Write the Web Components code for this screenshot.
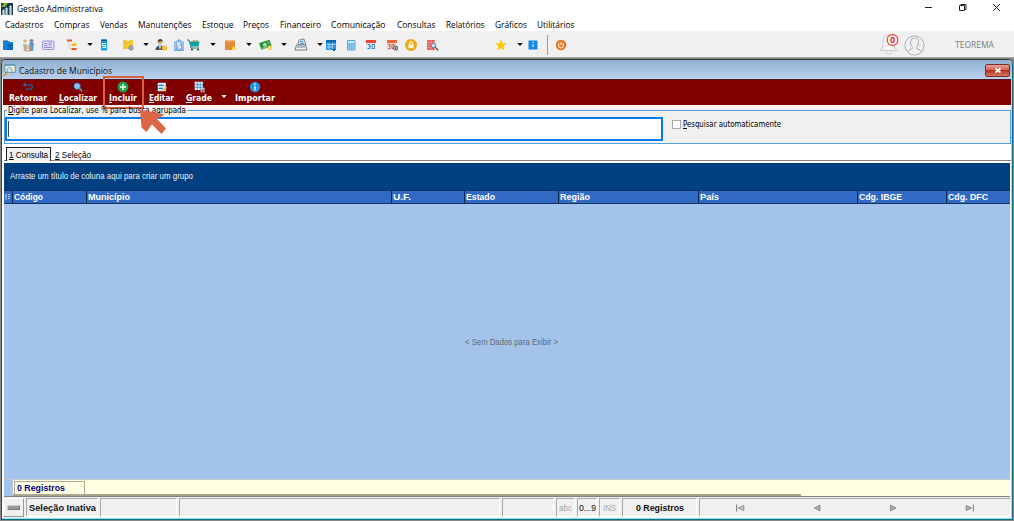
<!DOCTYPE html>
<html lang="pt-BR">
<head>
<meta charset="utf-8">
<title>Gestão Administrativa</title>
<style>
    html, body { margin: 0; height: 100%; overflow: hidden; }
    body { background: #fff; font-family: "Open Sans", "Noto Sans", sans-serif; font-size: 9px; color: #000; }
</style>
</head>
<body>
<app-shell></app-shell>

<script>
const ICONS = {
    folder: '<path d="M2 3h6l1 1h3v8H2z" fill="#1585dc"/><path d="M6 6h6v6H6z" fill="#0869bd"/><path d="M2 3h5" stroke="#0b60a8"/>',
    people: '<circle cx="4" cy="3" r="1.8" fill="#e5b178"/><circle cx="10.500" cy="3" r="2" fill="#7b8893"/><path d="M2 6h4l-1 7H3z" fill="#9cc1b6"/><path d="M8 5h5l-1 8h-3z" fill="#6097d7"/><path d="M3.500 9l3-1 4 1" stroke="#da9054" fill="none"/><rect x="4.500" y="10" width="4.500" height="3" fill="#f6cfaf" stroke="#db7d45" stroke-width=".7"/>',
    card: '<rect x="1.500" y="3" width="11.500" height="8.500" rx="1" fill="#e8e5fa" stroke="#9a91dc"/><path d="M3 5.500h3M3 7.500h3M8 5h3M8 7h3M3 9.500h8" stroke="#8e83d1"/><path d="M7 4v6" stroke="#a7a0df" stroke-width=".7"/>',
    tree: '<path d="M4 4v7h5M4 7h4" fill="none" stroke="#cfcfcf" stroke-width=".7"/><path d="M2 1.500h5v2H2zM6.500 10h5v2h-5z" fill="#f05525"/><path d="M6.500 5.500h5V8h-5z" fill="#fbb713"/>',
    book: '<path d="M4 1.500h6v11H4z" fill="#20a4e5"/><path d="M4 1.500h6v2H4z" fill="#0d659c"/><path d="M8.500 5.500h-3v2h3v2h-3" fill="none" stroke="#fff" stroke-width=".9"/>',
    puzzle: '<path d="M2 2h3l1 1.300h2L9 2h3v9H2z" fill="#f8c52f"/><circle cx="10" cy="10" r="2.100" fill="#a6b3ca" stroke="#738099"/>',
    user: '<circle cx="6" cy="4" r="2.300" fill="#e4a161"/><path d="M3.700 4c0-4 5-4 5 0L7 2.800z" fill="#373737"/><path d="M1.500 12c0-6 9-6 9 0z" fill="#394e60"/><path d="M5 8h2l-1 4z" fill="#fff"/><circle cx="10.500" cy="10" r="2.600" fill="#f9bf31"/>',
    bank: '<path d="M2 3.300h1.700L7 1l3.200 2.300H12V13H2z" fill="#75a8e5"/><path d="M2 4h10M3 5v7M11 5v7" stroke="#bdd9f8"/><path d="M8.700 5.500H5.500v2.200h3v2.300H5.300M7 4.500v6.500" stroke="#fff" fill="none" stroke-width=".9"/>',
    cart: '<path d="M0 2h2l2 8h8M3 8h9" stroke="#347a7b" fill="none"/><path d="M2.500 3.500h10L11.300 8H4z" fill="#00a5a5"/><path d="M5 3.500l2-2 2 2z" fill="#ed6d37"/><path d="M8 3.500l2-1.500 2 1.500z" fill="#72ad43"/><circle cx="5" cy="11.500" r="1.100" fill="#37474f"/><circle cx="11" cy="11.500" r="1.100" fill="#37474f"/>',
    note: '<path d="M2 2.500h10v7L9 12H2z" fill="#e58a38"/><path d="M4 2.500h4v2H4z" fill="#f1a65a"/><circle cx="11" cy="10.500" r="2" fill="#ffda37"/>',
    money: '<g transform="rotate(-18 7 7)"><path d="M1 3h11v7H1z" fill="#2b963e"/><circle cx="6" cy="6.500" r="2" fill="#a6d6a4"/><path d="M2 9h9M10 4v3" stroke="#86c28a"/></g><circle cx="11" cy="10" r="2.200" fill="#f7d44b"/>',
    scale: '<path d="M4 7l1-5 5-1 2 6z" fill="#dce9f1" stroke="#65757f" stroke-width=".8"/><path d="M6 4l3-1M6 6l4-1" stroke="#2f86bb"/><path d="M2.500 7h9l1.500 5H1z" fill="#edf1f4" stroke="#5c7080" stroke-width=".9"/><path d="M3 9h8" stroke="#6d8697"/>',
    table: '<path d="M2 2h10v10H2z" fill="#329be5"/><path d="M2 2h10v2.500H2z" fill="#0767b7"/><path d="M3 6.500h8M3 9h8M5 5v6M8.500 5v6" stroke="#bbdef8" stroke-width=".7"/><path d="M10 8v5M8 11l2 2 2-2" stroke="#075da3" fill="none"/>',
    calc: '<rect x="3" y="2" width="8.500" height="10.500" rx="1" fill="#56a9df"/><path d="M4 3h6.500v2.300H4z" fill="#c9e8fb"/><path d="M4 7h7M4 9h7M4 11h7" stroke="#d6efff" stroke-dasharray="1.300 .8"/>',
    calendar: '<path d="M2 3h10v9H2z" fill="#dfeaf4"/><path d="M2 2h10v3H2z" fill="#ef4535"/><path d="M3.500 6.500H6v4H3.500m1-2H6M8 6.500h2.500v4H8z" fill="none" stroke="#4d81bb"/>',
    calgear: '<path d="M2 3h9v9H2z" fill="#f3d5cd"/><path d="M2 2h10v3H2z" fill="#f06735"/><path d="M3 6.500h2v4H3m1-2h1M7 6.500h2v4H7z" fill="none" stroke="#c1635c"/><circle cx="10.500" cy="10" r="2" fill="#d8d8d8" stroke="#5d6872" stroke-width="1.200"/><circle cx="10.500" cy="10" r=".8" fill="#35434b"/>',
    lock: '<circle cx="7" cy="7" r="6" fill="#eba917"/><rect x="4.400" y="6.200" width="5.200" height="4" fill="#fff6ce"/><path d="M5.500 6V4.500q1.500-2 3 0V6M7 7.500v1.500" stroke="#fff" fill="none"/>',
    search: '<path d="M2 2h7.500v10H2z" fill="#e85355"/><path d="M2 4.500h7M2 7h7M2 9.500h7M4 2v10M6.500 2v10" stroke="#f7b5ab" stroke-width=".5"/><circle cx="8.500" cy="7.500" r="2.400" fill="#b1ddf6" stroke="#576b79" stroke-width=".8"/><path d="M10.200 9.200l3 3" stroke="#555" stroke-width="1.300"/>',
    star: '<path d="M7 1.500l1.600 3.800 4.100.3-3.100 2.700 1 4.100L7 10.200l-3.600 2.200 1-4.100-3.100-2.700 4.100-.3z" fill="#fcc40c"/>',
    info: '<path d="M2.500 2.500h9v9h-9z" fill="#1689e8"/><path d="M7 4v1.300M7 6.200V9" stroke="#d5efff" stroke-width="1.200"/>',
    power: '<circle cx="7" cy="7" r="5.300" fill="#e87620"/><path d="M4.700 5v3q0 2 2.300 2t2.300-2V5M7 3.800V7" stroke="#fff" fill="none"/>',
    drop: '<path d="M.3 5h5.400L3 8z" fill="currentColor"/>',
    back: '<path d="M2 4.500h8q2 0 2 2.500t-2 2.500H4" stroke="#1c5fa8" stroke-width="1.600" fill="none"/><path d="M4.500 1.500L1 4.500l3.500 3z" fill="#2368b2"/>',
    find: '<circle cx="6" cy="6" r="3.500" fill="#79c8fa" stroke="#3a9ae7"/><path d="M8.500 8.500l3.300 3.300" stroke="#7e93a9" stroke-width="2"/>',
    plus: '<circle cx="7" cy="7" r="6.300" fill="#20a34c"/><path d="M7 3.500v7M3.500 7h7" stroke="#fff" stroke-width="1.600"/>',
    edit: '<path d="M2 2h9.500v10H2z" fill="#d7ebfb"/><path d="M3 5h6M3 8.500h5" stroke="#1682d4" stroke-width="1.500"/><path d="M7 11.500l1-2 3.500-3 1.500 1.500-3.500 3z" fill="#f7b23c"/>',
    grid: '<path d="M2 1h9.500v9.500H2z" fill="#e8f5ff"/><path d="M2 4.200h9.500M2 7.400h9.500M5.200 1v9.500M8.400 1v9.500" stroke="#2a83d5" stroke-width=".9"/><path d="M9 8h4.500v5H9z" fill="#aecbe5"/><path d="M10.300 10.300h2v2h-2z" fill="#b21c24"/>',
    about: '<circle cx="7" cy="7" r="6" fill="#2094e9"/><path d="M7 3v1.800M7 6v5" stroke="#fff" stroke-width="1.600"/>',
    form: '<path d="M2 1h11v8H2z" fill="#f6f4dd" stroke="#54727c" stroke-width=".8"/><path d="M2 1.500h11" stroke="#4a9dc1"/><circle cx="7" cy="6.500" r="2.900" fill="#c4e8f5" stroke="#668a9b" stroke-width=".8"/><path d="M5 9l-4 4" stroke="#d59b43" stroke-width="1.600"/>',
    first: '<path d="M3 3v8" stroke="#858585" stroke-width="1.300"/><path d="M11.500 4v6L5 7z" fill="#ccc" stroke="#858585"/>',
    prev: '<path d="M10.500 3.500v7L4 7z" fill="#aaa" stroke="#858585"/>',
    next: '<path d="M4 3.500v7L10.500 7z" fill="#aaa" stroke="#858585"/>',
    last: '<path d="M2.500 4v6L9 7z" fill="#aaa" stroke="#858585"/><path d="M11 3v8" stroke="#858585" stroke-width="1.300"/>'
};

class UiIcon extends HTMLElement {
    constructor() {
        super();
        this.attachShadow({mode: 'open'});
    }
    connectedCallback() {
        const name = this.getAttribute('name');
        const width = name === 'drop' ? 6 : 14;
        const size = this.getAttribute('size') || width;
        this.shadowRoot.innerHTML = `
        <style>
            :host { display: block; flex: none; width: ${size}px; }
            svg { display: block; width: 100%; }
        </style>
        <svg viewBox="0 0 ${width} 14">${ICONS[name]}</svg>`;
    }
}
customElements.define('ui-icon', UiIcon);

// A single-line label, condensed or widened to the width it is given.
class UiLabel extends HTMLElement {
    constructor() {
        super();
        this.attachShadow({mode: 'open'}).innerHTML = `
        <style>
            :host { display: block; flex: none; white-space: nowrap; }
            span { display: inline-block; transform-origin: 0 50%; }
            ::slotted(u) { text-underline-offset: 1px; text-decoration-thickness: 1px; }
        </style>
        <span><slot></slot></span>`;
    }
    connectedCallback() {
        const target = Number(this.getAttribute('w'));
        if (!target) return;
        const span = this.shadowRoot.querySelector('span');
        const natural = span.getBoundingClientRect().width;
        span.style.transform = `scaleX(${target / natural})`;
        this.style.width = target + 'px';
    }
}

class TitleBar extends HTMLElement {
    constructor() {
        super();
        this.attachShadow({mode: 'open'}).innerHTML = `
        <style>
            :host { display: flex; height: 17px; align-items: center; }
            .logo { width: 12px; height: 12px; margin: 0 4px 0 1px; }
            .space { flex: 1; }
            .buttons { width: 85px; height: 17px; margin-right: 4px; }
        </style>
        <svg class="logo" viewBox="0 0 12 12"><path d="M0 0h12v12H0z" fill="#123a55"/><path d="M0 4l3-4h4L4 4z" fill="#82b52a"/><path d="M2 12V7h1v5M5 12V5h1v7M9 12V3h1v9" stroke="#fff" fill="none"/></svg>
        <ui-label w="86">Gestão Administrativa</ui-label>
        <div class="space"></div>
        <svg class="buttons" viewBox="0 0 85 17" fill="none" stroke="#222">
            <path d="M0 7.500h7M34.500 5.500h5v5h-5zM36 5V4.500h5v5h-1M68 4l7 7M75 4l-7 7"/>
        </svg>`;
    }
}

class MenuBar extends HTMLElement {
    constructor() {
        super();
        const items = [['Cadastros', 38.5, 4.5], ['Compras', 35.5, 10.5], ['Vendas', 27.5, 10.5], ['Manutenções', 53.5, 10.5],
            ['Estoque', 31.5, 10.5], ['Preços', 26, 10], ['Financeiro', 41, 10.5], ['Comunicação', 54.5, 10.5],
            ['Consultas', 38.5, 11], ['Relatórios', 38.5, 10.5], ['Gráficos', 32, 10.5], ['Utilitários', 37.5, 10.5]];
        this.attachShadow({mode: 'open'}).innerHTML = `
        <style>
            :host { display: flex; height: 15px; align-items: center; border-bottom: 1px solid #f1f1f1; box-sizing: border-box; }
        </style>
        ${items.map(([t, w, gap]) => `<ui-label w="${w}" style="margin-left:${gap}px">${t}</ui-label>`).join('')}`;
    }
}

class ToolBar extends HTMLElement {
    constructor() {
        super();
        const icons = [['folder', 1], ['people', 6], ['card', 6], ['tree', 10], ['drop', 8], ['book', 4], ['puzzle', 10],
            ['drop', 8], ['user', 5], ['bank', 4], ['cart', 1], ['drop', 9], ['note', 7], ['drop', 9], ['money', 7],
            ['drop', 8], ['scale', 7], ['drop', 9], ['table', 1], ['calc', 6], ['calendar', 6], ['calgear', 7],
            ['lock', 5], ['search', 7], ['star', 55], ['drop', 9], ['info', 3]];
        this.attachShadow({mode: 'open'}).innerHTML = `
        <style>
            :host { display: flex; height: 26px; align-items: center; background: #f0f0f0; border-bottom: 1px solid #a3a3a3; box-sizing: border-box; }
            hr { width: 1px; height: 20px; margin: 0 6px 0 7px; border: 0; background: #999; }
            .space { flex: 1; }
            .bell { width: 22px; height: 25px; margin-right: 4px; }
            .avatar { width: 21px; height: 23px; margin-right: 30px; }
            ui-label { margin-right: 20px; color: #7c7c7c; }
        </style>
        ${icons.map(([n, gap]) => `<ui-icon name="${n}" style="margin-left:${gap}px"></ui-icon>`).join('')}
        <hr>
        <ui-icon name="power"></ui-icon>
        <div class="space"></div>
        <svg class="bell" viewBox="0 0 22 25">
            <path d="M2 18.500q3-2 3-6V9q0-5 5.500-6Q16 4 16 9v3.500q0 4 3 6zM7.500 19q.2 3 3 3t3-3" fill="#f4f4f4" stroke="#ccc"/>
            <circle cx="14.500" cy="8" r="5.400" fill="#fff" stroke="#e63932" stroke-width="1.100"/>
            <text x="14.500" y="11.200" text-anchor="middle" font-family="Open Sans" font-size="9" font-weight="700" fill="#f01818">0</text>
        </svg>
        <svg class="avatar" viewBox="0 0 21 23" fill="none" stroke="#a5b0b1">
            <circle cx="10.500" cy="12.500" r="9.600"/>
            <path d="M3.500 19q1-2.500 5-3.500v-1Q6.500 12.500 6.500 9t4-4 4 4-2 5.500v1q4 1 5 3.500"/>
        </svg>
        <ui-label w="39">TEOREMA</ui-label>`;
    }
}

class ActionButton extends HTMLElement {
    constructor() {
        super();
        this.attachShadow({mode: 'open'}).innerHTML = `
        <style>
            :host { display: flex; flex-direction: column; align-items: center; flex: none; position: relative;
                color: #fff; font: bold 8.5px/11px "DejaVu Sans", sans-serif; }
            :host([marked])::after { content: ""; position: absolute; left: -6px; right: -7px; top: -4px; height: 29px;
                border: 2px solid #d8603f; }
            ui-icon { margin-top: 1px; }
        </style>
        <ui-icon name="${this.getAttribute('icon')}" size="12"></ui-icon>
        <slot></slot>`;
    }
}

class SearchPanel extends HTMLElement {
    constructor() {
        super();
        this.attachShadow({mode: 'open'}).innerHTML = `
        <style>
            :host { display: block; height: 40px; margin-left: 1px; flex: none;
                background: linear-gradient(#fbf3f3 4px, #f0f0f0 4px, #f0f0f0 39px, #fff 39px); font: 8.5px/11px "DejaVu Sans", sans-serif; }
            fieldset { display: flex; align-items: flex-start; height: 39px; margin: 0; padding: 0; min-width: 0;
                border: 1px solid #55a3dc; box-sizing: border-box; }
            legend { margin-left: 2px; padding: 0 1px; height: 11px; }
            .input { width: 658px; height: 24px; margin-top: 1px; padding: 2px 1px; border: 2px solid #0878ef; background: #fff; box-sizing: border-box; }
            .input::before { content: ""; display: block; width: 1px; height: 16px; background: #444; }
            .box { width: 9px; height: 9px; margin: 4px 2px 0 9px; border: 1px solid #aaa; background: #fff; box-sizing: border-box; }
            .box + ui-label { margin-top: 3px; }
        </style>
        <fieldset>
            <legend><ui-label w="178"><u>D</u>igite para Localizar, use % para busca agrupada</ui-label></legend>
            <div class="input"></div>
            <div class="box"></div>
            <ui-label w="98"><u>P</u>esquisar automaticamente</ui-label>
        </fieldset>`;
    }
}

class TabStrip extends HTMLElement {
    constructor() {
        super();
        this.attachShadow({mode: 'open'}).innerHTML = `
        <style>
            :host { display: flex; flex: none; height: 16px; margin: 0 0 2px 1px; padding: 2px 0 0 2px; background: #fff; border-bottom: 1px solid #848484; box-sizing: border-box; }
            .tab { height: 14px; padding: 0 4px; line-height: 16px; }
            .on { padding: 0 2px; line-height: 14px; border: 1px solid #222; border-bottom: 0; background: #f0f0f0; box-sizing: border-box; }
        </style>
        <div class="tab on"><ui-label w="39"><u>1</u> Consulta</ui-label></div>
        <div class="tab"><ui-label w="36"><u>2</u> Seleção</ui-label></div>`;
    }
}

class DataGrid extends HTMLElement {
    constructor() {
        super();
        const cols = [['Código', 74, 29], ['Município', 305, 42], ['U.F.', 73, 18], ['Estado', 94, 29], ['Região', 140, 30],
            ['País', 159, 19], ['Cdg. IBGE', 89, 43], ['Cdg. DFC', 64, 40]];
        this.attachShadow({mode: 'open'}).innerHTML = `
        <style>
            :host { display: flex; flex-direction: column; flex: 1; margin: 0 1px; background: #a4c3eb; border-bottom: 1px solid #85847c; }
            .group { height: 27px; box-sizing: border-box; padding: 7px 0 0 6px; line-height: 13px; background: #003f80; color: #eef4fb; }
            .head { display: flex; height: 14px; background: #316ac5; border: solid #123260; border-width: 1px 0; box-sizing: border-box;
                color: #fff; font-weight: bold; line-height: 13px; }
            .head div { border-left: 1px solid #10264d; padding-left: 1px; box-sizing: border-box; flex: none; }
            .mark { width: 8px; display: flex; align-items: center; justify-content: center; flex: none; }
            .body { flex: 1; display: flex; align-items: center; justify-content: center; color: #626971; padding-left: 9px; }
            .foot { display: flex; height: 17px; background: #ffffe1; border-top: 1px solid #c8c8c8; box-sizing: border-box; }
            .gutter { width: 8px; background: #a4c3eb; border-right: 1px solid #c3c9d1; }
            .sum { display: flex; flex-direction: column; width: 788px; border-bottom: 2px solid #a5a48a; }
            .count { width: 71px; height: 14px; flex: none; margin: 1px 0 -1px 1px; padding-left: 2px; box-sizing: border-box; border: 1px solid #aaa99a;
                line-height: 13px; color: #000080; font-weight: bold; }
        </style>
        <div class="group"><ui-label w="183">Arraste um título de coluna aqui para criar um grupo</ui-label></div>
        <div class="head">
            <span class="mark"><svg width="6" height="8"><path d="M1 1v6M3 1.500h2M3 3.500h2M3 5.500h2" stroke="#b9d1f4"/></svg></span>
            ${cols.map(([t, w, tw]) => `<div style="width:${w}px"><ui-label w="${tw}">${t}</ui-label></div>`).join('')}
        </div>
        <div class="body"><ui-label w="93">&lt; Sem Dados para Exibir &gt;</ui-label></div>
        <div class="foot">
            <div class="gutter"></div>
            <div class="sum"><div class="count"><ui-label w="48">0 Registros</ui-label></div></div>
        </div>`;
    }
}

class StatusBar extends HTMLElement {
    constructor() {
        super();
        this.attachShadow({mode: 'open'}).innerHTML = `
        <style>
            :host { display: grid; grid-template-columns: 21px 72px 77px 321px 52px 19px 20px 21px 75px 1fr; gap: 2px; flex: none;
                height: 21px; padding: 1px 0; background: #f0f0f0; box-sizing: border-box; }
            div { display: flex; align-items: center; justify-content: center; border: 1px solid; border-color: #aaa #fff #fff #aaa; }
            .btn { border-color: #fff #999 #999 #fff; }
            .btn i { width: 11px; height: 3px; border: 1px solid; border-color: #ccc #777 #777 #ccc; background: #999; }
            b, .nums { color: #111; }
            .off { color: #a6a6a6; }
            .nav { justify-content: space-between; padding: 0 34px; }
        </style>
        <div class="btn"><i></i></div>
        <div><ui-label w="67"><b>Seleção Inativa</b></ui-label></div>
        <div></div><div></div><div></div>
        <div class="off"><ui-label w="13">abc</ui-label></div>
        <div class="nums"><ui-label w="17">0...9</ui-label></div>
        <div class="off"><ui-label w="13">INS</ui-label></div>
        <div><ui-label w="48"><b>0 Registros</b></ui-label></div>
        <div class="nav">
            <ui-icon name="first" size="12"></ui-icon><ui-icon name="prev" size="12"></ui-icon>
            <ui-icon name="next" size="12"></ui-icon><ui-icon name="last" size="12"></ui-icon>
        </div>`;
    }
}

class ChildWindow extends HTMLElement {
    constructor() {
        super();
        this.attachShadow({mode: 'open'}).innerHTML = `
        <style>
            :host { display: flex; flex: 1; min-height: 0; background: #888; position: relative;
                font-family: "Liberation Sans", Arial, sans-serif; font-size: 9px; }
            .frame { display: flex; flex-direction: column; flex: 1; min-width: 0; margin: 1px; border: 1px solid #146b80;
                border-left-color: #404040; border-top-color: #333; border-radius: 5px 5px 0 0; background: #fff;
                box-shadow: inset -1px -1px #8ae5f4; padding: 0 1px 1px; overflow: hidden; }
            header { display: flex; align-items: center; height: 19px; flex: none; box-sizing: border-box; padding: 1px 2px 0 1px;
                background: linear-gradient(#91b0d2, #bad1ed); color: #111; font-family: "Open Sans", sans-serif; margin: 0 -1px; }
            header ui-label { margin-left: 3px; margin-right: auto; }
            .close { width: 25px; height: 13px; border: 1px solid #762e2b; border-radius: 2px; box-sizing: border-box;
                background: linear-gradient(#e9a298, #d3614f 45%, #b73621 50%, #d5745c); }
            .close svg { display: block; margin: auto; }
            nav { display: flex; height: 26px; background: #800000; color: #fff; padding-left: 6px; flex: none; border-top: 1px solid #55151e; box-sizing: border-box; }
            .pointer { position: absolute; left: 138px; top: 49px; width: 30px; height: 28px; }
        </style>
        <div class="frame">
            <header>
                <ui-icon name="form" size="13"></ui-icon>
                <ui-label w="93">Cadastro de Municípios</ui-label>
                <span class="close"><svg width="10" height="11"><path d="M2.500 3.500l5 4M7.500 3.500l-5 4" stroke="#fff" stroke-width="1.800"/></svg></span>
            </header>
            <nav>
                <action-button icon="back"><ui-label w="38">Retornar</ui-label></action-button>
                <action-button icon="find" style="margin-left:12px"><ui-label w="38"><u>L</u>ocalizar</ui-label></action-button>
                <action-button icon="plus" marked style="margin-left:12px"><ui-label w="28"><u>I</u>ncluir</ui-label></action-button>
                <action-button icon="edit" style="margin-left:12px"><ui-label w="25"><u>E</u>ditar</ui-label></action-button>
                <action-button icon="grid" style="margin-left:12px"><ui-label w="26"><u>G</u>rade</ui-label></action-button>
                <ui-icon name="drop" style="margin:10px 0 0 9px"></ui-icon>
                <action-button icon="about" style="margin-left:8px"><ui-label w="40">Importar</ui-label></action-button>
            </nav>
            <search-panel></search-panel>
            <tab-strip></tab-strip>
            <data-grid></data-grid>
            <status-bar></status-bar>
        </div>
        <svg class="pointer" viewBox="138 107 30 28"><path d="M140 109.500l24.500 5-7.500 4.500 9 9.500-4.500 5.500-9.500-9.500-5.500 7.500-5-4.500z" fill="#dc6644"/></svg>`;
    }
}

class AppShell extends HTMLElement {
    constructor() {
        super();
        this.attachShadow({mode: 'open'}).innerHTML = `
        <style>
            :host { display: flex; flex-direction: column; height: 521px; }
        </style>
        <title-bar></title-bar>
        <menu-bar></menu-bar>
        <tool-bar></tool-bar>
        <child-window></child-window>`;
    }
}

customElements.define('title-bar', TitleBar);
customElements.define('menu-bar', MenuBar);
customElements.define('tool-bar', ToolBar);
customElements.define('action-button', ActionButton);
customElements.define('search-panel', SearchPanel);
customElements.define('tab-strip', TabStrip);
customElements.define('data-grid', DataGrid);
customElements.define('status-bar', StatusBar);
customElements.define('child-window', ChildWindow);
customElements.define('app-shell', AppShell);
// labels measure themselves, so they come last, once everything around them is styled
customElements.define('ui-label', UiLabel);
</script>
</body>
</html>
